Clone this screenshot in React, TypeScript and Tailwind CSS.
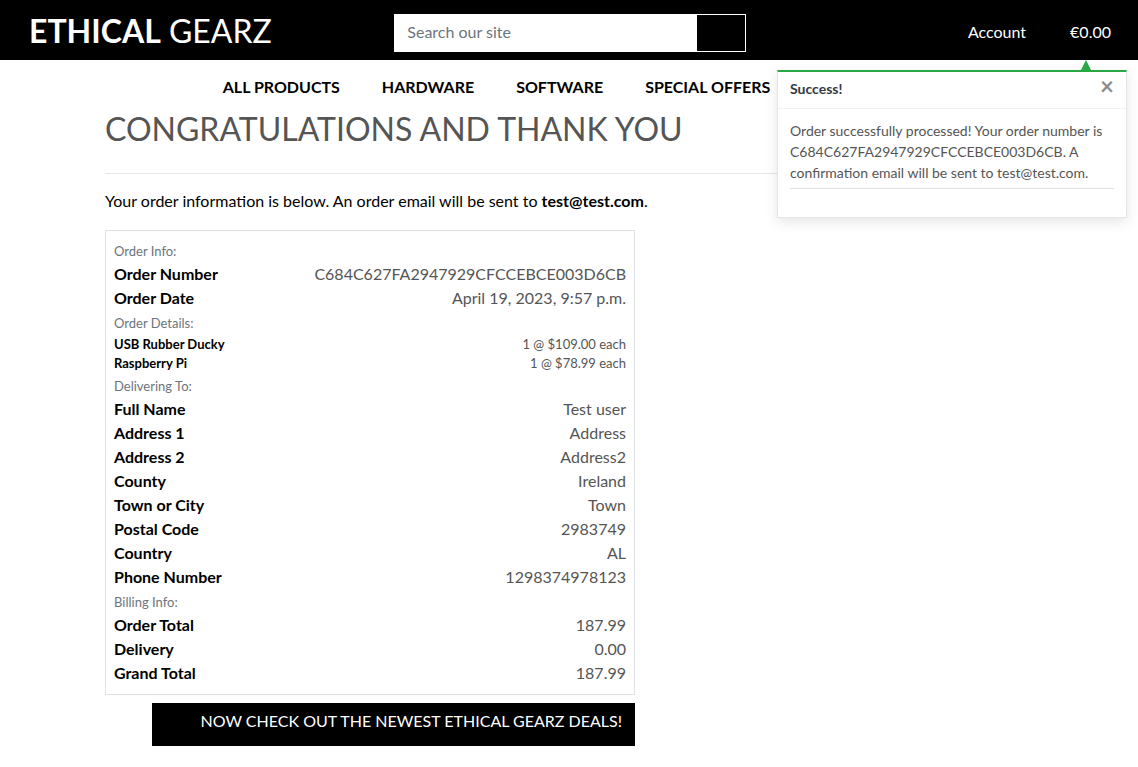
import React from 'react';

type Row = [string, string];

const orderInfo: Row[] = [
  ['Order Number', 'C684C627FA2947929CFCCEBCE003D6CB'],
  ['Order Date', 'April 19, 2023, 9:57 p.m.'],
];
const orderDetails: Row[] = [
  ['USB Rubber Ducky', '1 @ $109.00 each'],
  ['Raspberry Pi', '1 @ $78.99 each'],
];
const delivery: Row[] = [
  ['Full Name', 'Test user'],
  ['Address 1', 'Address'],
  ['Address 2', 'Address2'],
  ['County', 'Ireland'],
  ['Town or City', 'Town'],
  ['Postal Code', '2983749'],
  ['Country', 'AL'],
  ['Phone Number', '1298374978123'],
];
const billing: Row[] = [
  ['Order Total', '187.99'],
  ['Delivery', '0.00'],
  ['Grand Total', '187.99'],
];

function Section({ title, rows, small = false }: { title: string; rows: Row[]; small?: boolean }) {
  return (
    <section>
      <h3 className="pt-[2px] text-[13px] leading-[22px] text-[#6c757d]">{title}</h3>
      <dl className={small ? 'pt-px text-[13px] leading-[19px]' : 'text-base leading-6'}>
        {rows.map(([label, value]) => (
          <div key={label} className="flex justify-between">
            <dt className="font-bold text-black">{label}</dt>
            <dd className="text-[#555]">{value}</dd>
          </div>
        ))}
      </dl>
    </section>
  );
}

export default function App() {
  return (
    <div className="font-['Lato',sans-serif] text-base text-black">
      <header className="grid h-[60px] grid-cols-3 items-center bg-black text-white">
        <a href="#" className="pt-[2px] pl-[29px] text-[32px] leading-10 whitespace-nowrap">
          <strong>ETHICAL</strong> GEARZ
        </a>
        <form className="mt-[6px] flex h-[38px] pr-[13px] pl-[15px]" onSubmit={(e) => e.preventDefault()}>
          <input
            type="search"
            aria-label="Search our site"
            placeholder="Search our site"
            className="min-w-0 flex-1 border border-white bg-white px-3 pb-[2px] text-black outline-none placeholder:text-[#6c757d] placeholder:opacity-100"
          />
          <button type="submit" aria-label="Search" className="w-[50px] border border-white bg-black" />
        </form>
        <nav aria-label="Account" className="mt-1 flex justify-end gap-11 pr-[27px]">
          <a href="#">Account</a>
          <div className="relative">
            <a href="#">€0.00</a>
            <div className="absolute top-10 -right-4 z-10 w-[350px]">
              <div className="ml-[304px] h-[10px] w-[10px] bg-[#28a745] [clip-path:polygon(50%_0,100%_100%,0_100%)]" />
              <div
                role="status"
                className="border border-t-2 border-[#e5e5e5] border-t-[#28a745] bg-white text-[14px] shadow-[0_4px_12px_rgba(0,0,0,0.1)]"
              >
                <div className="flex h-[37px] items-center justify-between border-b border-[#f2f2f2] px-3 pb-1">
                  <strong className="text-[14px] text-[#343a40]">Success!</strong>
                  <button type="button" aria-label="Close" className="pb-1 text-[24px] leading-6 font-bold text-[#8c8c8c]">
                    ×
                  </button>
                </div>
                <div className="px-3 pt-[11px] pb-7">
                  <p className="border-b border-[#e0e0e0] pb-[5px] leading-[21px] text-[#555]">
                    Order successfully processed! Your order number is C684C627FA2947929CFCCEBCE003D6CB. A confirmation
                    email will be sent to test@test.com.
                  </p>
                </div>
              </div>
            </div>
          </div>
        </nav>
      </header>

      <nav aria-label="Main" className="flex justify-center gap-[42px] pt-[15px] pr-[145px] leading-6 font-bold">
        <a href="#">ALL PRODUCTS</a>
        <a href="#">HARDWARE</a>
        <a href="#">SOFTWARE</a>
        <a href="#">SPECIAL OFFERS</a>
      </nav>

      <main className="mx-auto max-w-[960px] px-4">
        <h1 className="border-b border-[#e5e5e5] pt-[10px] pb-6 text-[32px] leading-10 text-[#555]">
          CONGRATULATIONS AND THANK YOU
        </h1>
        <p className="pt-[15px] leading-6">
          Your order information is below. An order email will be sent to <strong>test@test.com</strong>.
        </p>
        <div className="mt-[17px] w-[530px] max-w-full">
          <div className="border border-[#dee2e6] px-2 pt-[7px] pb-[9px]">
            <Section title="Order Info:" rows={orderInfo} />
            <Section title="Order Details:" rows={orderDetails} small />
            <Section title="Delivering To:" rows={delivery} />
            <Section title="Billing Info:" rows={billing} />
          </div>
          <div className="mt-2 flex justify-end">
            <a href="#" className="h-[43px] w-[483px] bg-black px-[13px] pt-[6px] text-right leading-6 text-white">
              NOW CHECK OUT THE NEWEST ETHICAL GEARZ DEALS!
            </a>
          </div>
        </div>
      </main>
    </div>
  );
}
